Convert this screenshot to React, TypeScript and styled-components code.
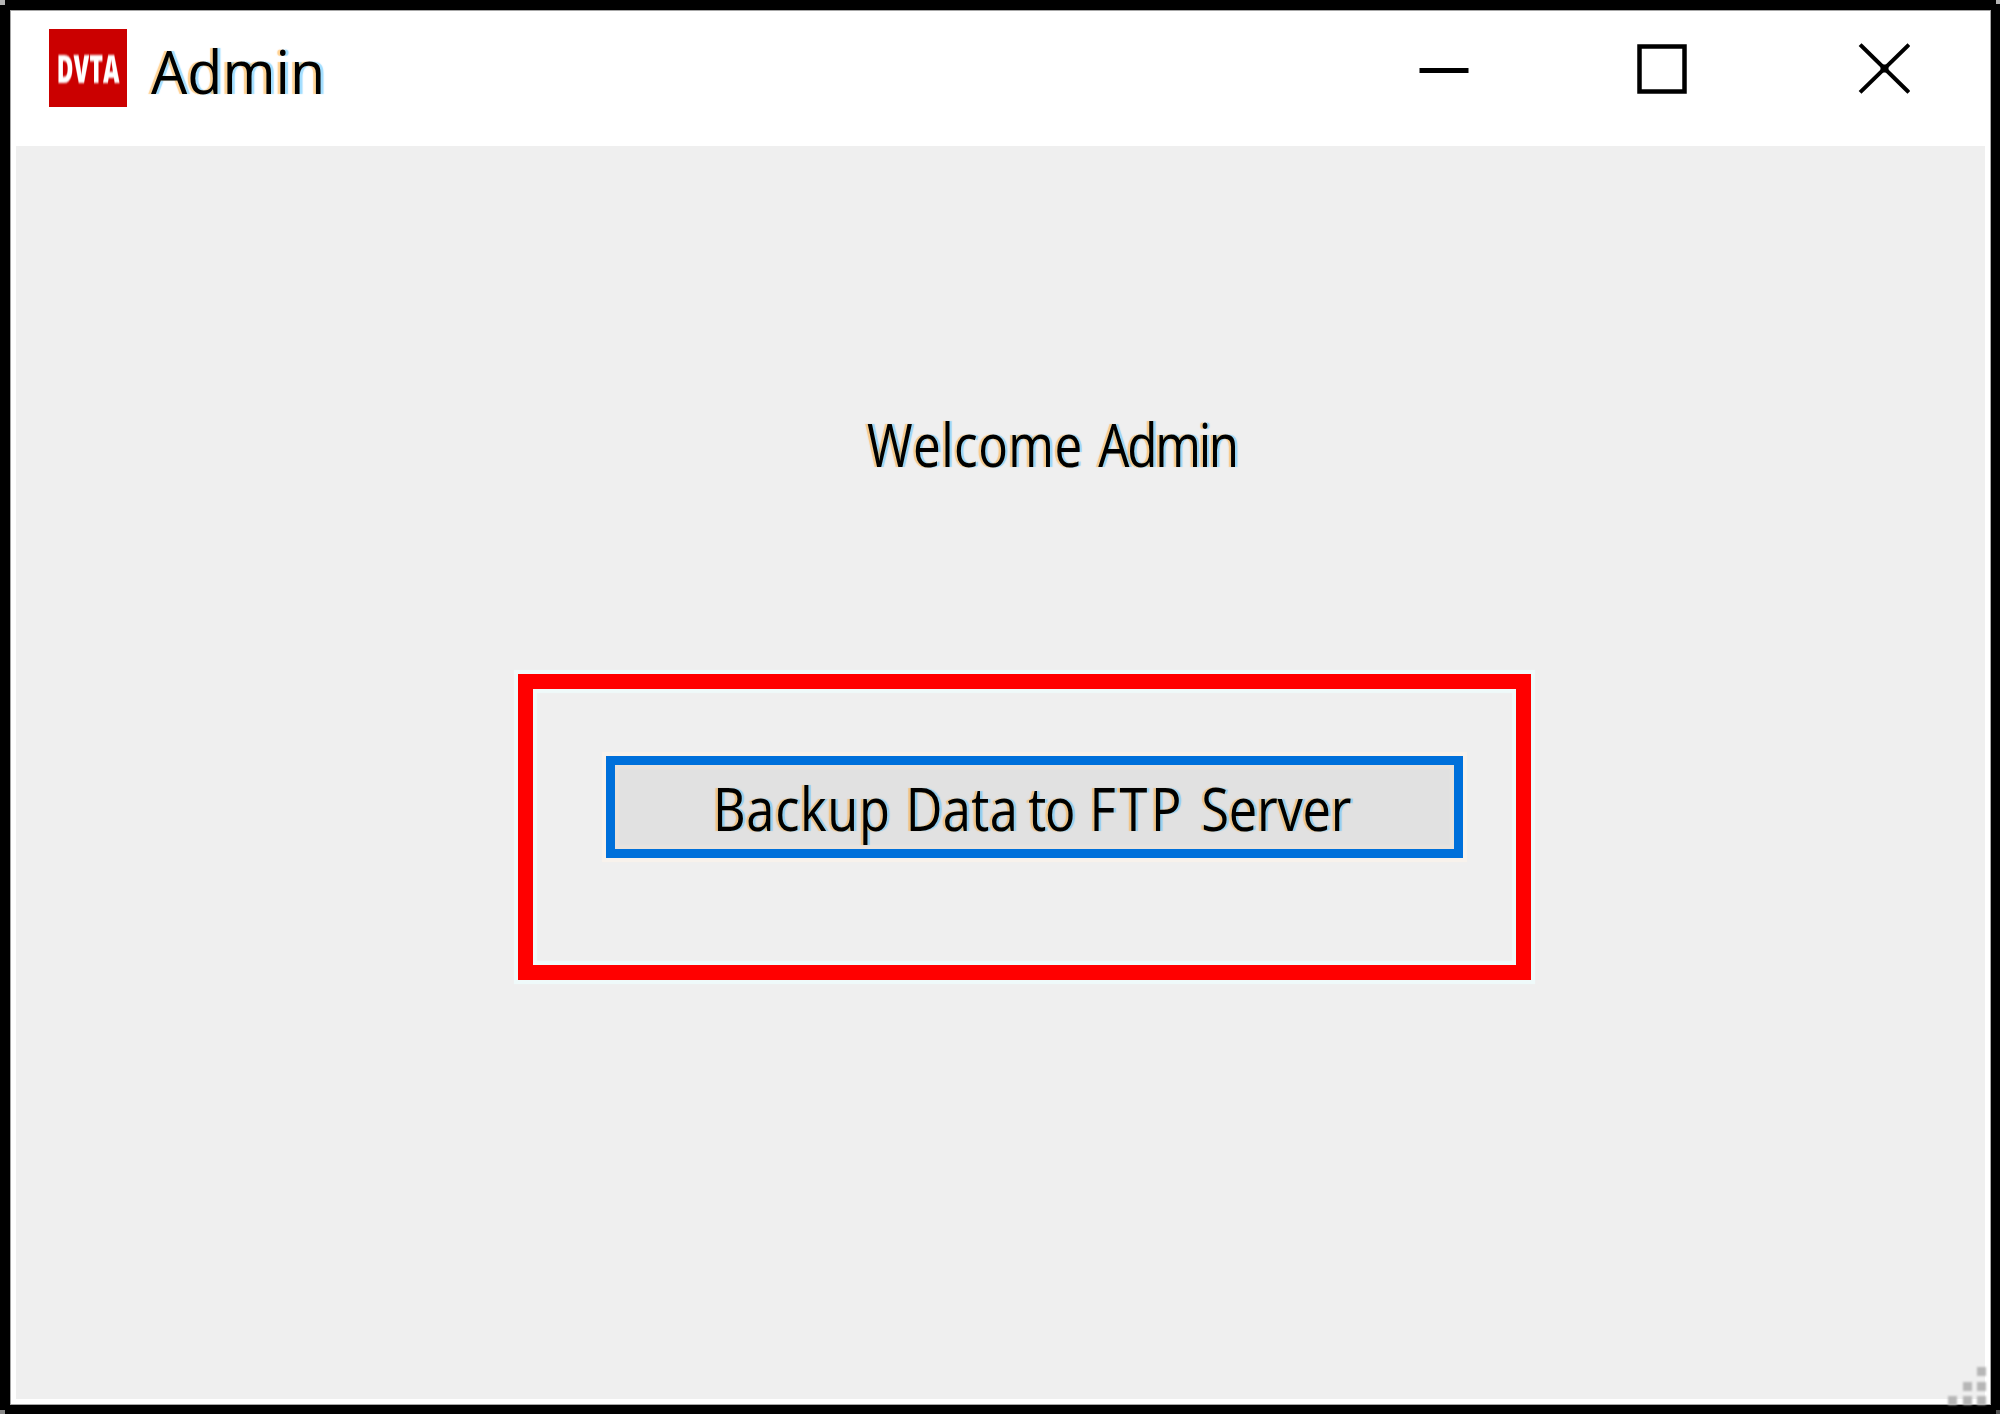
import React from "react";
import styled, { createGlobalStyle } from "styled-components";

const GlobalStyle = createGlobalStyle`
  * { box-sizing: border-box; }
  body { margin: 0; background: #000; overflow: hidden; }
`;

const Frame = styled.div`
  width: 2000px;
  height: 1414px;
  padding: 10px 9px 9px 10px;
  display: flex;
  background:
    linear-gradient(#b4b4b4, #b4b4b4) left top / 5px 5px no-repeat,
    linear-gradient(#b4b4b4, #b4b4b4) right top / 4px 4px no-repeat,
    linear-gradient(#888, #888) left bottom / 5px 4px no-repeat,
    linear-gradient(#555, #555) right bottom / 4px 4px no-repeat,
    #000;
`;

const Window = styled.main`
  flex: 1;
  display: flex;
  flex-direction: column;
  background: #fff;
  border: 1px solid #a6a6a6;
  padding: 0 5px 5px;
`;

const TitleBar = styled.header`
  height: 135px;
  flex: none;
  display: flex;
  align-items: flex-start;
  padding: 18px 75px 0 33px;
`;

const AppIcon = styled.div`
  width: 78px;
  height: 78px;
  flex: none;
  display: flex;
  align-items: center;
  justify-content: center;
  background: #cb0000;
`;

const Label = styled.span<{ $size: number; $stretch: number }>`
  display: flex;
  margin: 0;
  font-family: "Open Sans", "Noto Sans", sans-serif;
  font-size: ${(p) => p.$size}px;
  font-weight: 400;
  line-height: 80px;
  white-space: pre;
  color: #000;
  transform: scaleX(${(p) => p.$stretch});
  transform-origin: left center;
  text-shadow: -3px 0 1px rgba(255, 165, 40, 0.5), 3px 0 1px rgba(70, 190, 255, 0.5);
`;

const Word = styled.span<{ $tracking?: number; $before?: number }>`
  letter-spacing: ${(p) => p.$tracking ?? 0}px;
  margin-left: ${(p) => p.$before ?? 0}px;
`;

const IconText = styled.span`
  font: 800 38px/78px "Open Sans", sans-serif;
  color: #fff;
  transform: scaleX(0.6);
  white-space: nowrap;
  filter: blur(1px);
`;

const Title = styled.div`
  margin: 2px auto 0 24px;
`;

const Controls = styled.div`
  display: flex;
  gap: 168px;
  padding-top: 13px;
`;

const ControlButton = styled.button<{ $shift?: number }>`
  width: 52px;
  height: 52px;
  margin-left: ${(p) => p.$shift ?? 0}px;
  padding: 0;
  border: 0;
  background: none;
  svg { display: block; }
`;

const Client = styled.section`
  flex: 1;
  position: relative;
  background: #efefef;
  padding-top: 258px;
`;

const Welcome = styled.div`
  margin-left: 851px;
`;

const Highlight = styled.div`
  width: 1013px;
  height: 306px;
  margin: 190px 0 0 502px;
  padding: 67px 0 0 73px;
  border: 15px solid #f00;
  box-shadow: 0 0 1px 4px #effafa, inset 0 0 1px 4px #effafa;
`;

const BackupButton = styled.button`
  display: block;
  width: 857px;
  height: 102px;
  padding: 1px 0 0 98px;
  border: 9px solid #0070da;
  background: #e1e1e1;
  box-shadow: 0 0 1px 4px #f8f2ec, inset 0 0 1px 4px #e8e3de;
  text-align: left;
`;

const Grip = styled.div`
  position: absolute;
  right: -1px;
  bottom: -6px;
  display: grid;
  grid-template-columns: repeat(3, 9px);
  grid-auto-rows: 9px;
  gap: 5.5px;
`;

const GripDot = styled.i<{ $col: number; $row: number }>`
  grid-column: ${(p) => p.$col};
  grid-row: ${(p) => p.$row};
  background: #b6b6b6;
  filter: blur(1px);
`;

const dots = [[3, 1], [2, 2], [3, 2], [1, 3], [2, 3], [3, 3]];

export default function App() {
  return (
    <>
      <GlobalStyle />
      <Frame>
        <Window>
          <TitleBar>
            <AppIcon><IconText>DVTA</IconText></AppIcon>
            <Title><Label as="h1" $size={60} $stretch={0.957}>Admin</Label></Title>
            <Controls>
              <ControlButton aria-label="Minimize">
                <svg width="52" height="52"><path d="M1.5 28.5H50.5" stroke="#000" strokeWidth="5" /></svg>
              </ControlButton>
              <ControlButton aria-label="Maximize" $shift={-2}>
                <svg width="52" height="52"><rect x="3.5" y="4.5" width="45" height="45" fill="none" stroke="#000" strokeWidth="4.5" /></svg>
              </ControlButton>
              <ControlButton aria-label="Close" $shift={2}>
                <svg width="52" height="52">
                  <path d="M3.5 4L49.5 49M49.5 4L3.5 49" stroke="#000" strokeWidth="4" strokeLinecap="square" />
                  <rect x="22.5" y="22.5" width="8" height="8" rx="2" />
                </svg>
              </ControlButton>
            </Controls>
          </TitleBar>
          <Client>
            <Welcome>
              <Label $size={61} $stretch={0.81}>
                <Word $tracking={0.5}>Welcome </Word>
                <Word $tracking={-2.8} $before={3}>Admin</Word>
              </Label>
            </Welcome>
            <Highlight>
              <BackupButton>
                <Label $size={61} $stretch={0.83}>
                  <Word $tracking={0.8}>Backup </Word>
                  <Word $tracking={0.4} $before={1.5}>Data </Word>
                  <Word $tracking={-1.5} $before={-4}>to </Word>
                  <Word $tracking={4.5} $before={4}>FTP </Word>
                  <Word $tracking={-0.3} $before={-1}>Server</Word>
                </Label>
              </BackupButton>
            </Highlight>
            <Grip>
              {dots.map(([c, r]) => <GripDot key={`${c}-${r}`} $col={c} $row={r} />)}
            </Grip>
          </Client>
        </Window>
      </Frame>
    </>
  );
}
